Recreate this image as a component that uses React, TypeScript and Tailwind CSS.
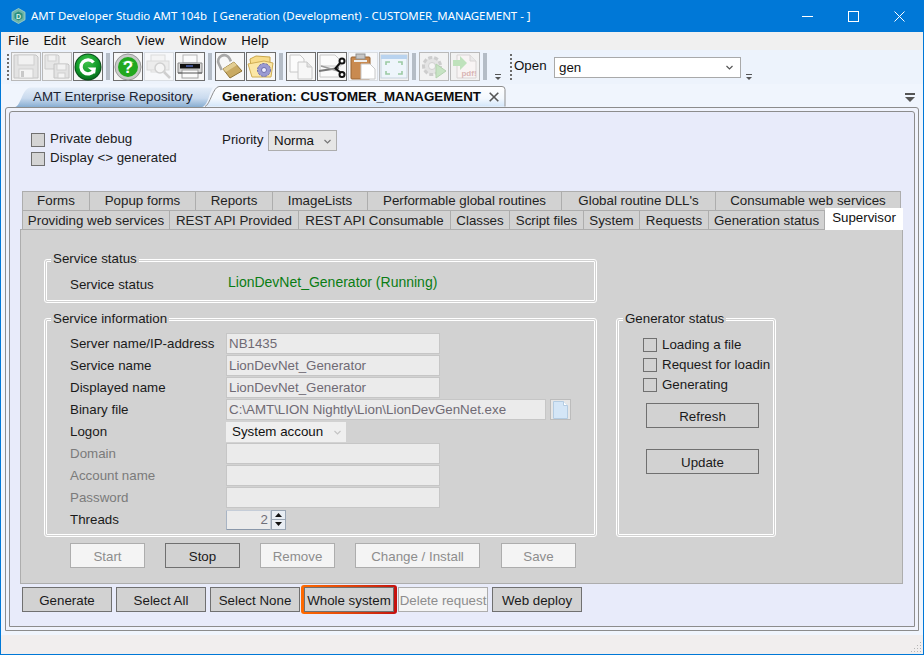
import React from "react";

const ARIAL = "font-['Liberation_Sans',Arial,sans-serif]";

function Grip({ h = "h-[26px]" }: { h?: string }) {
  return <div className={`w-0 border-l-2 border-dotted border-[#6b6b6b] ${h}`} />;
}

function Sep({ mr = "mr-[3px]" }: { mr?: string }) {
  return <div className={`ml-[3px] mt-[1px] h-[27px] w-[4px] bg-[#b4bcc6] ${mr}`} />;
}

function TBtn({ dark, children, plain }: { dark?: boolean; plain?: boolean; children: React.ReactNode }) {
  const cls = dark
    ? "border-[#6e6e6e] bg-[#f7f7f7]"
    : plain
      ? "border-[#d9dde2] bg-[#f7f8fa]"
      : "border-[#b9b9b9] bg-[#f2f2f2]";
  return (
    <div className={`flex h-[29px] w-[30px] items-center justify-center border ${cls}`}>
      {children}
    </div>
  );
}

const Ico = ({ children }: { children: React.ReactNode }) => (
  <svg width="28" height="27" viewBox="0 0 28 27">{children}</svg>
);

const Floppy = () => (
  <Ico>
    <path d="M2 2h22l2 2v21H2z" fill="#e3e3e3" stroke="#c4c4c4" />
    <rect x="6" y="2" width="16" height="10" fill="#f1f1f1" stroke="#cfcfcf" />
    <rect x="7" y="16" width="14" height="9" fill="#f4f4f4" stroke="#cfcfcf" />
    <rect x="9" y="18" width="3" height="6" fill="#c9c9c9" />
  </Ico>
);
const Floppies = () => (
  <Ico>
    <path d="M2 2h13l1 1v13H2z" fill="#e6e6e6" stroke="#cbcbcb" />
    <rect x="5" y="2" width="8" height="6" fill="#f2f2f2" stroke="#d2d2d2" />
    <path d="M11 11h14l1 1v13H11z" fill="#e3e3e3" stroke="#c4c4c4" />
    <rect x="14" y="11" width="9" height="6" fill="#f2f2f2" stroke="#d2d2d2" />
    <rect x="15" y="20" width="7" height="5" fill="#f4f4f4" stroke="#cfcfcf" />
  </Ico>
);
const GreenG = () => (
  <svg width="28" height="28" viewBox="0 0 28 28">
    <defs>
      <radialGradient id="gg" cx="45%" cy="30%" r="75%">
        <stop offset="0%" stopColor="#3fc24a" />
        <stop offset="60%" stopColor="#109a28" />
        <stop offset="100%" stopColor="#04641a" />
      </radialGradient>
    </defs>
    <circle cx="14" cy="14" r="13.5" fill="#0a4d1a" />
    <circle cx="14" cy="14" r="12.5" fill="url(#gg)" />
    <path d="M19.5 9.5A7 7 0 1 0 20 17.5" fill="none" stroke="#fff" strokeWidth="3.4" />
    <path d="M13.5 14.5h8.5l-1 6.5-2.5-2.8z" fill="#fff" />
  </svg>
);
const Help = () => (
  <svg width="28" height="28" viewBox="0 0 28 28">
    <circle cx="14" cy="14" r="13" fill="#c9cbc9" stroke="#9a9a9a" />
    <circle cx="14" cy="14" r="10" fill="#22a81f" />
    <path d="M8 10a7 5 0 0 1 12 0z" fill="#6fd66a" />
    <text x="14" y="20" textAnchor="middle" fontSize="17" fontWeight="700" fill="#fff" fontFamily="Liberation Sans">?</text>
  </svg>
);
const Preview = () => (
  <Ico>
    <rect x="6" y="2" width="14" height="17" fill="#f4f4f4" stroke="#dcdcdc" />
    <rect x="2" y="8" width="22" height="9" fill="#ececec" stroke="#dadada" />
    <circle cx="15" cy="15" r="5" fill="#f5f5f5" stroke="#d0d0d0" strokeWidth="1.5" />
    <path d="M19 19l6 6" stroke="#cfcfcf" strokeWidth="2.5" />
  </Ico>
);
const Printer = () => (
  <Ico>
    <rect x="7" y="2" width="14" height="8" fill="#fafafa" stroke="#b5b5b5" />
    <path d="M2 10h24v10H2z" fill="#d7d7d7" stroke="#8a8a8a" />
    <rect x="4" y="11" width="20" height="4.5" fill="#111" />
    <rect x="10" y="12" width="7" height="2" fill="#3d4f8a" />
    <rect x="6" y="17" width="16" height="8" fill="#fbfbfb" stroke="#a0a0a0" />
    <path d="M2 20h24" stroke="#555" />
  </Ico>
);
const Lock = () => (
  <Ico>
    <path d="M3 15V8a6 6 0 0 1 12 0v3" fill="none" stroke="#a8a8a8" strokeWidth="2.6" transform="rotate(-25 9 10)" />
    <path d="M7 16l11-7 8 9-12 7z" fill="#c9aa62" stroke="#8f7436" />
    <path d="M7 16l11-7 3 3-11 7z" fill="#e2cd92" />
  </Ico>
);
const FolderGear = () => (
  <Ico>
    <path d="M3 6l6-3 14 1v17H5z" fill="#f8dc8a" stroke="#c9a64a" />
    <path d="M1 11l16-3 9 2-2 14H5z" fill="#fbe7a6" stroke="#d0ae55" />
    <circle cx="17" cy="17" r="6.5" fill="#9a9ad2" stroke="#6e6eaa" strokeWidth="1" strokeDasharray="2.5 1" />
    <circle cx="17" cy="17" r="2.5" fill="#eef" stroke="#6e6eaa" />
  </Ico>
);
const Docs = () => (
  <Ico>
    <path d="M3 2h10l4 4v13H3z" fill="#fbfbfb" stroke="#c8c8c8" />
    <path d="M11 9h9l5 5v12H11z" fill="#f7f7f7" stroke="#c8c8c8" />
    <path d="M20 9v5h5" fill="#e2e2e2" stroke="#c8c8c8" />
  </Ico>
);
const Scissors = () => (
  <Ico>
    <path d="M2 2h15l6 6v5H2z" fill="#fbfbfb" stroke="#c8c8c8" />
    <path d="M2 13v11h21v-4" fill="#fbfbfb" stroke="#c8c8c8" />
    <path d="M1 18l20-3" stroke="#777" strokeWidth="2" />
    <path d="M3 13l17 5" stroke="#999" strokeWidth="1.5" />
    <path d="M17 16l5-6" stroke="#111" strokeWidth="2" />
    <path d="M17 15l6 5" stroke="#111" strokeWidth="2" />
    <circle cx="24" cy="8" r="2.5" fill="#fff" stroke="#111" strokeWidth="2" />
    <circle cx="24" cy="21.5" r="2.5" fill="#fff" stroke="#111" strokeWidth="2" />
  </Ico>
);
const Clipboard = () => (
  <Ico>
    <rect x="2" y="4" width="19" height="22" rx="1" fill="#c98a50" stroke="#9a6433" />
    <rect x="7" y="1" width="9" height="5" fill="#c6c6c6" stroke="#8f8f8f" />
    <rect x="5" y="7" width="13" height="2" fill="#eee" />
    <path d="M12 11h9l5 5v10H12z" fill="#fff" stroke="#c8c8c8" />
  </Ico>
);
const Frame = () => (
  <Ico>
    <rect x="1" y="2" width="26" height="23" fill="#eef5fb" stroke="#c6d2de" />
    <rect x="1" y="2" width="26" height="4" fill="#b9d3ef" />
    <path d="M6 12V9h4M18 9h4v3M22 18v3h-4M10 21H6v-3" fill="none" stroke="#9ccaa4" strokeWidth="1.6" />
  </Ico>
);
const GearPlay = () => (
  <Ico>
    <circle cx="12" cy="13" r="8.5" fill="#e4e4e4" stroke="#cdcdcd" strokeWidth="3" strokeDasharray="4 2" />
    <circle cx="12" cy="13" r="3.5" fill="#f5f5f5" stroke="#d0d0d0" />
    <path d="M16 11l10 7-10 7z" fill="#c6e3c3" stroke="#b4d2b0" />
  </Ico>
);
const Pdf = () => (
  <Ico>
    <path d="M6 2h13l6 6v17H6z" fill="#f8f4f4" stroke="#d8d4d4" />
    <path d="M19 2v6h6" fill="#e9e9e9" stroke="#d8d4d4" />
    <path d="M2 7h7V3l7 7-7 7v-4H2z" fill="#bfe2bc" />
    <text x="18" y="23" textAnchor="middle" fontSize="8" fontWeight="700" fill="#d8b4b4" fontFamily="Liberation Sans">pdf!</text>
  </Ico>
);

function Overflow() {
  return (
    <svg width="8" height="8" viewBox="0 0 8 8" className="shrink-0">
      <path d="M1 1.5h6" stroke="#555" />
      <path d="M1 4h6L4 7z" fill="#555" />
    </svg>
  );
}

function Toolbar() {
  return (
    <div className="flex h-[34px] shrink-0 items-start bg-[#edf3fc] pt-[2px]">
      <div className="ml-[6px] mr-[2px] mt-[2px]">
        <Grip />
      </div>
      <div className="flex gap-[1px]">
        <TBtn><Floppy /></TBtn>
        <TBtn><Floppies /></TBtn>
        <TBtn dark><GreenG /></TBtn>
      </div>
      <Sep />
      <div className="flex gap-[1px]">
        <TBtn dark><Help /></TBtn>
        <TBtn plain><Preview /></TBtn>
        <TBtn dark><Printer /></TBtn>
      </div>
      <Sep />
      <div className="flex gap-[1px]">
        <TBtn dark><Lock /></TBtn>
        <TBtn dark><FolderGear /></TBtn>
      </div>
      <Sep />
      <div className="flex gap-[1px]">
        <TBtn dark><Docs /></TBtn>
        <TBtn dark><Scissors /></TBtn>
        <TBtn plain><Clipboard /></TBtn>
        <TBtn><Frame /></TBtn>
      </div>
      <Sep />
      <div className="flex gap-[1px]">
        <TBtn><GearPlay /></TBtn>
        <TBtn><Pdf /></TBtn>
      </div>
      <Sep mr="mr-[7px]" />
      <div className="mt-[21px]"><Overflow /></div>
      <div className="ml-[8px] mt-[2px]"><Grip /></div>
      <span className={`ml-[2px] mt-[6px] w-[40px] text-[13.33px] leading-[16px] text-[#111] ${ARIAL}`}>Open</span>
      <div className={`mt-[5px] flex h-[21px] w-[187px] items-center justify-between border border-[#a9a9a9] bg-white pl-[4px] pr-[7px] text-[13.33px] text-[#111] ${ARIAL}`}>
        <span>gen</span>
        <Chevron />
      </div>
      <div className="ml-[4px] mt-[21px]"><Overflow /></div>
    </div>
  );
}

function Chevron({ color = "#555" }: { color?: string }) {
  return (
    <svg width="7" height="5" viewBox="0 0 7 5">
      <path d="M.5 1l3 3 3-3" fill="none" stroke={color} strokeWidth="1.2" />
    </svg>
  );
}

function TitleBar() {
  return (
    <div className="flex h-8 shrink-0 items-center bg-[#0078d7] pl-[10px] text-white">
      <svg width="15" height="16" viewBox="0 0 15 16">
        <path d="M7.5 .5l6.5 3.7v7.6l-6.5 3.7L1 11.8V4.2z" fill="#6fb5a6" stroke="#a9d6cb" strokeWidth=".8" />
        <path d="M7.5 3.5l4 2.3v4.4l-4 2.3-4-2.3V5.8z" fill="#2a8f7e" />
        <text x="7.5" y="10.6" textAnchor="middle" fontSize="7" fontWeight="700" fill="#d9f0ea" fontFamily="Liberation Sans">D</text>
      </svg>
      <span className="ml-[5px] whitespace-pre font-['Noto_Sans',sans-serif] text-[11.45px]">
        AMT Developer Studio AMT 104b  [ Generation (Development) - CUSTOMER_MANAGEMENT - ]
      </span>
      <div className="ml-auto flex items-center">
        <svg width="11" height="11" viewBox="0 0 11 11" className="mr-[35px]"><path d="M0 5.5h11" stroke="#fff" /></svg>
        <svg width="11" height="11" viewBox="0 0 11 11" className="mr-[35px]"><rect x=".5" y=".5" width="10" height="10" fill="none" stroke="#fff" /></svg>
        <svg width="11" height="11" viewBox="0 0 11 11" className="mr-[18px]"><path d="M.5.5l10 10M10.5.5l-10 10" stroke="#fff" /></svg>
      </div>
    </div>
  );
}

function MenuBar() {
  return (
    <div className="flex h-[18px] shrink-0 items-center gap-[14.5px] bg-[#f0f0f0] pl-[7px] font-['Roboto',sans-serif] text-[13.33px] text-[#111]">
      {["File", "Edit", "Search", "View", "Window", "Help"].map((m) => (
        <span key={m}>{m}</span>
      ))}
    </div>
  );
}

function DocTabs() {
  return (
    <div className={`flex h-[23px] shrink-0 items-end bg-[#f0f5fd] text-[13.33px] ${ARIAL}`}>
      <div className="relative ml-[14px] flex h-[20px] w-[199px] items-center pl-[18px] text-[#1b2330]">
        <svg className="absolute left-0 top-0" width="199" height="20" viewBox="0 0 199 20">
          <defs>
            <linearGradient id="tabA" x1="0" x2="0" y1="0" y2="1">
              <stop offset="0%" stopColor="#e4edf8" />
              <stop offset="55%" stopColor="#c9daee" />
              <stop offset="100%" stopColor="#88aed2" />
            </linearGradient>
          </defs>
          <path d="M0 20C6 19 7 2 15 .5H198C194 6 193 19 187 20z" fill="url(#tabA)" />
        </svg>
        <span className="relative">AMT Enterprise Repository</span>
      </div>
      <div className="relative -ml-[9px] flex h-[21px] w-[301px] items-center whitespace-nowrap pl-[17px] font-bold text-[#0c0c0c]">
        <svg className="absolute left-0 top-0" width="301" height="21" viewBox="0 0 301 21">
          <defs>
            <linearGradient id="tabB" x1="0" x2="0" y1="0" y2="1">
              <stop offset="0%" stopColor="#ffffff" />
              <stop offset="60%" stopColor="#f3f8fe" />
              <stop offset="100%" stopColor="#d3e6f9" />
            </linearGradient>
          </defs>
          <path d="M0 20.5C5 19 8 1 14 .5H297q3 0 3 3V20.5" fill="url(#tabB)" stroke="#8f8f8f" />
        </svg>
        <span className="relative">Generation: CUSTOMER_MANAGEMENT</span>
        <svg width="10" height="10" viewBox="0 0 10 10" className="relative ml-[8px] shrink-0">
          <path d="M.7.7l8.6 8.6M9.3.7L.7 9.3" stroke="#555" strokeWidth="1.6" />
        </svg>
      </div>
      <div className="ml-auto mb-[5px] mr-[8px]">
        <svg width="10" height="9" viewBox="0 0 10 9">
          <path d="M0 1h10" stroke="#555" strokeWidth="2" />
          <path d="M0 4h10L5 9z" fill="#555" />
        </svg>
      </div>
    </div>
  );
}

function Check({ label, dark, className = "" }: { label: string; dark?: boolean; className?: string }) {
  return (
    <div className={`flex items-center text-[13.33px] text-[#1a1a1a] ${className}`}>
      <span className={`mr-[5px] h-[14px] w-[14px] shrink-0 border border-[#707070] ${dark ? "bg-[#d4d4d4]" : "bg-[#d2d2d2]"}`} />
      <span className="-mt-[1px] whitespace-nowrap">{label}</span>
    </div>
  );
}

const row1: [string, string][] = [
  ["Forms", "w-[68px]"],
  ["Popup forms", "w-[106px]"],
  ["Reports", "w-[77px]"],
  ["ImageLists", "w-[95px]"],
  ["Performable global routines", "w-[194px]"],
  ["Global routine DLL's", "w-[154px]"],
  ["Consumable web services", "w-[185px]"],
];
const row2: [string, string][] = [
  ["Providing web services", "w-[148px]"],
  ["REST API Provided", "w-[129px]"],
  ["REST API Consumable", "w-[152px]"],
  ["Classes", "w-[59px]"],
  ["Script files", "w-[74px]"],
  ["System", "w-[56px]"],
  ["Requests", "w-[69px]"],
  ["Generation status", "w-[116px]"],
];

function TabCell({ text, w, lower }: { text: string; w: string; lower?: boolean }) {
  return (
    <div className={`flex h-[19px] shrink-0 items-center justify-center whitespace-nowrap border-r border-t border-[#adadad] first:border-l bg-[#d2d2d2] text-[#222] ${lower ? "pt-[2px]" : ""} ${w}`}>
      {text}
    </div>
  );
}

function Group({ title, className, lower, children }: { title: string; className: string; lower?: boolean; children: React.ReactNode }) {
  return (
    <div className={`rounded-[3px] border-[3px] border-double border-white ${className}`}>
      <div className={`-mt-[11px] ml-[4px] h-[16px] w-fit bg-[#d2d2d2] px-[2px] text-[13.33px] leading-[16px] text-[#1a1a1a] ${lower ? "pt-[1px]" : ""}`}>
        {title}
      </div>
      {children}
    </div>
  );
}

function Btn({ label, w, disabled, className = "" }: { label: string; w: string; disabled?: boolean; className?: string }) {
  return (
    <div
      className={`flex h-[25px] items-center justify-center whitespace-nowrap border pt-[2px] text-[13.33px] ${w} ${
        disabled ? "border-[#adadad] bg-[#f4f4f4] text-[#8d8d8d]" : "border-[#707070] bg-[#d2d2d2] text-[#1a1a1a]"
      } ${className}`}
    >
      {label}
    </div>
  );
}

function Field({ value, w = "w-[214px]" }: { value?: string; w?: string }) {
  return (
    <div className={`flex h-[21px] items-center border border-[#c6c6c6] bg-[#ebebeb] pl-[2px] text-[13.33px] text-[#6f6a74] ${w}`}>
      {value}
    </div>
  );
}

function InfoRow({ label, muted, children }: { label: string; muted?: boolean; children: React.ReactNode }) {
  return (
    <div className="flex h-[21px] items-center">
      <span className={`w-[156px] whitespace-nowrap text-[13.33px] ${muted ? "text-[#7b7b7b]" : "text-[#1a1a1a]"}`}>{label}</span>
      {children}
    </div>
  );
}

function Supervisor() {
  return (
    <div className="ml-[10px] h-[355px] w-[883px] border border-[#adadad] bg-[#d2d2d2] pl-[23px] pt-[29px] text-[13.33px]">
      <div className="flex">
        <div className="w-[553px]">
          <Group title="Service status" className="h-[44px] w-[553px]">
            <div className="ml-[23px] mt-[5px] flex h-[21px] items-center">
              <span className="mt-[5px] w-[158px] text-[#1a1a1a]">Service status</span>
              <span className="text-[14px] text-[#0a7d14]">LionDevNet_Generator (Running)</span>
            </div>
          </Group>
        </div>
      </div>
      <div className="mt-[15px] flex gap-[19px]">
        <Group title="Service information" lower className="h-[219px] w-[553px]">
          <div className="ml-[23px] mt-[7px] flex flex-col gap-[1px]">
            <InfoRow label="Server name/IP-address"><Field value="NB1435" /></InfoRow>
            <InfoRow label="Service name"><Field value="LionDevNet_Generator" /></InfoRow>
            <InfoRow label="Displayed name"><Field value="LionDevNet_Generator" /></InfoRow>
            <InfoRow label="Binary file">
              <Field value="C:\AMT\LION Nightly\Lion\LionDevGenNet.exe" w="w-[320px]" />
              <div className="ml-[4px] flex h-[21px] w-[21px] items-center justify-center border border-[#bcbcbc] bg-[#e6e6e6]">
                <svg width="15" height="18" viewBox="0 0 15 18">
                  <path d="M.5.5h10l4 4v13H.5z" fill="#d4e6f7" stroke="#b4cce2" />
                  <path d="M10.5.5v4h4" fill="#fff" stroke="#b4cce2" />
                </svg>
              </div>
            </InfoRow>
            <InfoRow label="Logon">
              <div className="flex h-[20px] w-[120px] items-center justify-between bg-[#efefef] pl-[6px] pr-[5px] pt-[1px] text-[13.33px] text-[#111]">
                <span>System accoun</span>
                <Chevron color="#c4c4c4" />
              </div>
            </InfoRow>
            <InfoRow label="Domain" muted><Field /></InfoRow>
            <InfoRow label="Account name" muted><Field /></InfoRow>
            <InfoRow label="Password" muted><Field /></InfoRow>
            <InfoRow label="Threads">
              <div className="flex h-[20px] w-[45px] items-center justify-end rounded-[1px] border border-[#c5cdd8] border-b-[#8a98aa] border-l-[#a8b4c4] bg-[#ebebeb] pr-[2px] text-[13.33px] text-[#6f6f78]">
                2
              </div>
              <div className="flex h-[20px] w-[15px] flex-col border border-[#9aa6b4] bg-[#e8edf3]">
                <div className="flex flex-1 items-center justify-center border-b border-[#9aa6b4]">
                  <svg width="7" height="4" viewBox="0 0 7 4"><path d="M3.5 0L7 4H0z" fill="#111" /></svg>
                </div>
                <div className="flex flex-1 items-center justify-center">
                  <svg width="7" height="4" viewBox="0 0 7 4"><path d="M0 0h7L3.5 4z" fill="#111" /></svg>
                </div>
              </div>
            </InfoRow>
          </div>
        </Group>
        <Group title="Generator status" lower className="h-[219px] w-[160px]">
          <div className="ml-[24px] mt-[9px] flex w-[132px] flex-col">
            <Check label="Loading a file" className="h-[20px]" />
            <Check label="Request for loadin" className="h-[20px]" />
            <Check label="Generating" className="h-[20px]" />
            <Btn label="Refresh" w="w-[113px]" className="ml-[3px] mt-[8px]" />
            <Btn label="Update" w="w-[113px]" className="ml-[3px] mt-[21px]" />
          </div>
        </Group>
      </div>
      <div className="ml-[26px] mt-[6px] flex gap-[20px]">
        <Btn label="Start" w="w-[75px]" disabled />
        <Btn label="Stop" w="w-[75px]" />
        <Btn label="Remove" w="w-[75px]" disabled />
        <Btn label="Change / Install" w="w-[125px]" disabled />
        <Btn label="Save" w="w-[75px]" disabled className="ml-[1px]" />
      </div>
    </div>
  );
}

export default function App() {
  return (
    <div className={`flex h-[655px] w-[924px] flex-col overflow-hidden border-x border-b border-[#0078d7] bg-[#f0f5fd]`}>
      <TitleBar />
      <MenuBar />
      <Toolbar />
      <DocTabs />
      <div className="ml-[4px] h-[524px] w-[914px] shrink-0 rounded-t-[3px] border border-[#8c8c8c] bg-[#f0f3fc] p-[3px]">
        <div className={`h-[516px] rounded-t-[3px] border border-[#8c8c8c] bg-[#e8ebfa] text-[13.33px] ${ARIAL}`}>
          <div className="flex h-[79px] pl-[21px] pt-[18px]">
            <div className="w-[191px]">
              <Check label="Private debug" dark className="h-[19px]" />
              <Check label="Display <> generated" dark className="h-[19px]" />
            </div>
            <span className="w-[46px] text-[#1a1a1a]">Priority</span>
            <div className="flex h-[21px] w-[69px] items-center justify-between border border-[#adadad] bg-[#e6e6e6] pl-[5px] pr-[5px] pt-[1px] text-[#111]">
              <span>Norma</span>
              <Chevron color="#777" />
            </div>
          </div>
          <div className="ml-[12px] flex h-[19px]">
            {row1.map(([t, w]) => <TabCell key={t} text={t} w={w} />)}
          </div>
          <div className="relative z-10 ml-[12px] flex h-[19px] items-end">
            {row2.map(([t, w]) => <TabCell key={t} text={t} w={w} lower />)}
            <div className="-mb-[1px] flex h-[22px] w-[78px] shrink-0 items-center justify-center bg-white pb-[2px] text-[#111]">
              Supervisor
            </div>
          </div>
          <Supervisor />
          <div className="ml-[12px] mt-[3px] flex gap-[4px]">
            <Btn label="Generate" w="w-[90px]" />
            <Btn label="Select All" w="w-[90px]" />
            <Btn label="Select None" w="w-[90px]" />
            <div className="relative">
              <div className="absolute -inset-x-[3px] -inset-y-[2px] rounded-[3px] bg-gradient-to-r from-[#ff6a00] to-[#c40f0f]" />
              <Btn label="Whole system" w="w-[90px]" className="relative" />
            </div>
            <Btn label="Delete request" w="w-[90px]" disabled />
            <Btn label="Web deploy" w="w-[90px]" />
          </div>
        </div>
      </div>
      <div className="mt-[4px] flex flex-1 items-end justify-end bg-[#f1eeee]">
        <svg width="12" height="12" viewBox="0 0 12 12" className="mb-[1px] mr-[1px]">
          {[[10, 2], [7, 5], [10, 5], [4, 8], [7, 8], [10, 8], [1, 11], [4, 11], [7, 11], [10, 11]].map(([x, y]) => (
            <rect key={`${x}-${y}`} x={x} y={y - 1} width="1" height="1" fill="#b5b5b5" />
          ))}
        </svg>
      </div>
    </div>
  );
}
